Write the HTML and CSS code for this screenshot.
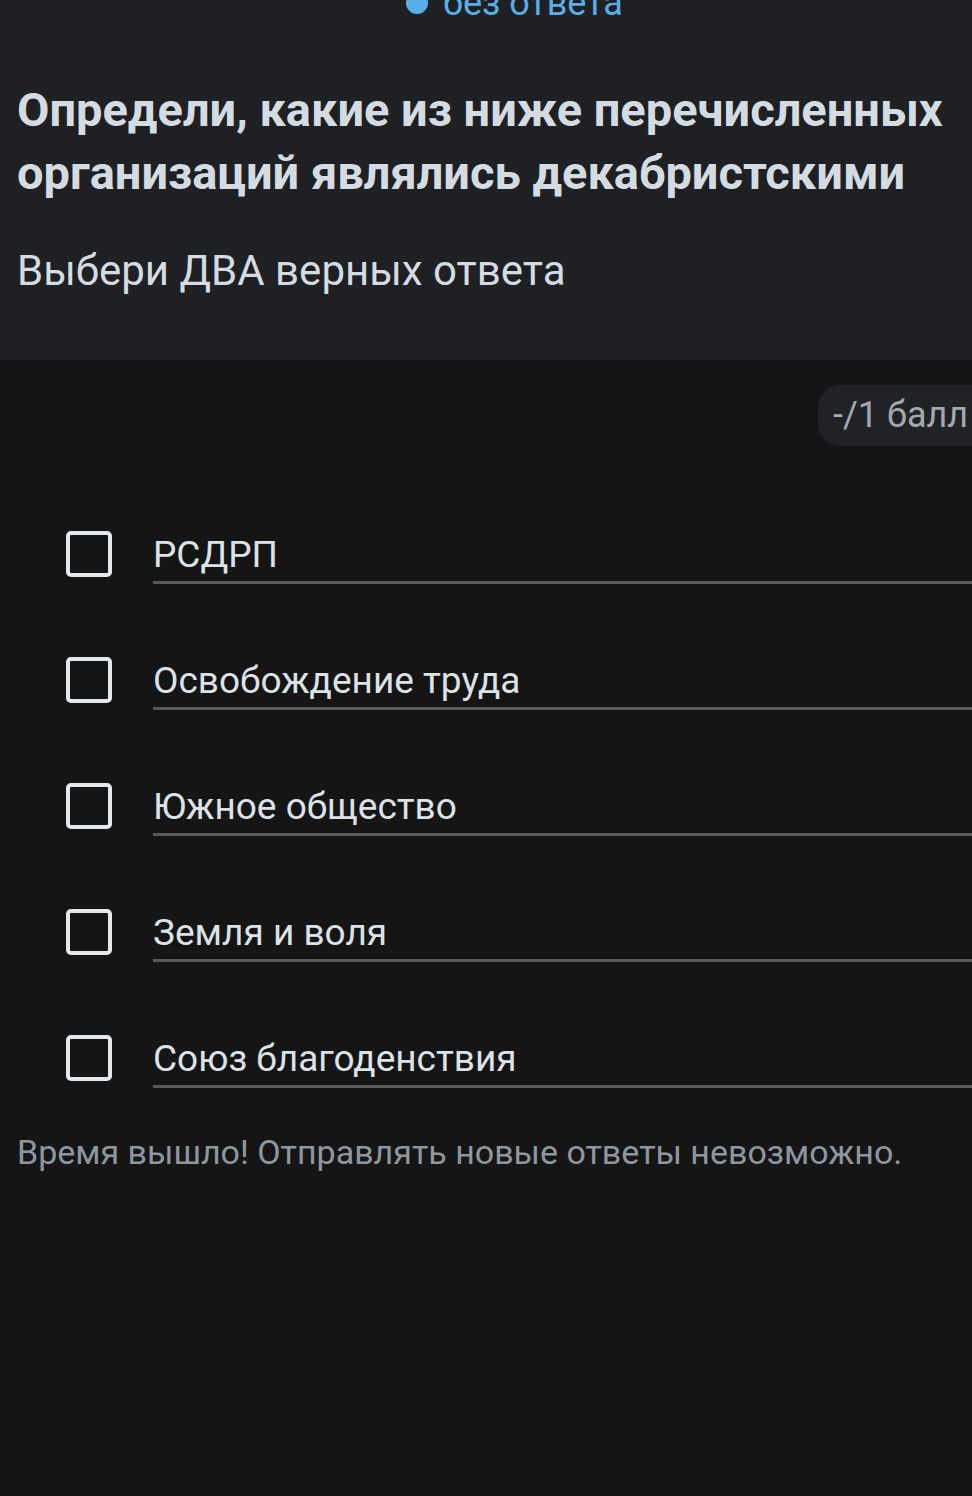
FILE: index.html
```html
<!DOCTYPE html>
<html lang="ru">
<head>
<meta charset="utf-8">
<link rel="stylesheet" href="styles.css">
</head>
<body>
<header class="question">
  <div class="status"><span class="status-dot"></span><span class="status-text">без ответа</span></div>
  <h1 class="title">Определи, какие из ниже перечисленных организаций являлись декабристскими</h1>
  <p class="hint">Выбери ДВА верных ответа</p>
</header>
<main class="answers">
  <div class="score-row"><span class="score">-/1 балл</span></div>
  <ul class="options">
    <li class="option"><span class="box"></span><span class="label">РСДРП</span></li>
    <li class="option"><span class="box"></span><span class="label">Освобождение труда</span></li>
    <li class="option"><span class="box"></span><span class="label">Южное общество</span></li>
    <li class="option"><span class="box"></span><span class="label">Земля и воля</span></li>
    <li class="option"><span class="box"></span><span class="label">Союз благоденствия</span></li>
  </ul>
  <p class="timeout">Время вышло! Отправлять новые ответы невозможно.</p>
</main>
</body>
</html>
```

FILE: styles.css
```css
html, body {
  margin: 0;
  padding: 0;
  background: #151515;
  font-family: Roboto, "Noto Sans", sans-serif;
}
body {
  width: 972px;
  height: 1496px;
  overflow: hidden;
}
.question {
  background: #1f2023;
  height: 360px;
  box-sizing: border-box;
  padding: 0 17px;
  overflow: hidden;
}
.status {
  display: flex;
  align-items: center;
  gap: 15px;
  margin-left: 389px;
  margin-top: -15px;
  height: 36px;
  font-size: 36px;
  line-height: 36px;
  color: #5aaee8;
}
.status-dot {
  flex: none;
  width: 22px;
  height: 22px;
  border-radius: 50%;
  background: #5aaee8;
}
.title {
  margin: 57px 0 0;
  font-size: 47px;
  line-height: 63px;
  font-weight: 700;
  color: #d4dce1;
}
.hint {
  margin: 43px 0 0;
  font-size: 42px;
  line-height: 48px;
  color: #d4dce1;
}
.answers {
  padding-top: 25px;
}
.score-row {
  display: flex;
  justify-content: flex-start;
  padding-left: 818px;
}
.score {
  flex: none;
  display: block;
  background: #212225;
  color: #a3a9ae;
  font-size: 36px;
  line-height: 61px;
  height: 61px;
  padding: 0 20px 0 15px;
  border-radius: 22px 0 0 22px;
  white-space: nowrap;
}
.options {
  list-style: none;
  margin: 85px 0 0;
  padding: 0;
  display: flex;
  flex-direction: column;
  gap: 73px;
}
.option {
  display: flex;
  align-items: flex-start;
  padding-left: 66px;
}
.box {
  flex: none;
  width: 46px;
  height: 46px;
  box-sizing: border-box;
  border: 4px solid #e3e9ed;
  border-radius: 5px;
  margin-right: 41px;
}
.label {
  flex: 1;
  font-size: 37px;
  line-height: 48px;
  padding-bottom: 2px;
  color: #dce2e6;
  border-bottom: 3px solid #58595b;
}
.timeout {
  margin: 44px 0 0 17px;
  font-size: 34px;
  line-height: 40px;
  color: #8e979e;
}
```
